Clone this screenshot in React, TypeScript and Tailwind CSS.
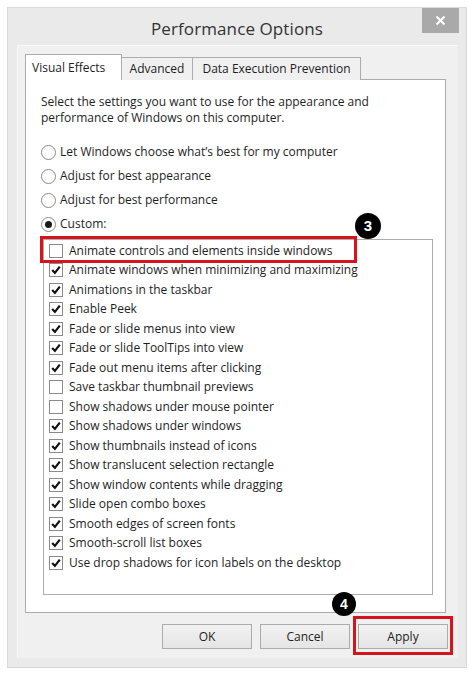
import React from 'react';

const font = { fontFamily: '"Open Sans", "Noto Sans", sans-serif' };

const effects: { label: string; on: boolean }[] = [
  { label: 'Animate controls and elements inside windows', on: false },
  { label: 'Animate windows when minimizing and maximizing', on: true },
  { label: 'Animations in the taskbar', on: true },
  { label: 'Enable Peek', on: true },
  { label: 'Fade or slide menus into view', on: true },
  { label: 'Fade or slide ToolTips into view', on: true },
  { label: 'Fade out menu items after clicking', on: true },
  { label: 'Save taskbar thumbnail previews', on: false },
  { label: 'Show shadows under mouse pointer', on: false },
  { label: 'Show shadows under windows', on: true },
  { label: 'Show thumbnails instead of icons', on: true },
  { label: 'Show translucent selection rectangle', on: true },
  { label: 'Show window contents while dragging', on: true },
  { label: 'Slide open combo boxes', on: true },
  { label: 'Smooth edges of screen fonts', on: true },
  { label: 'Smooth-scroll list boxes', on: true },
  { label: 'Use drop shadows for icon labels on the desktop', on: true },
];

const Badge: React.FC<{ n: number; className: string }> = ({ n, className }) => (
  <div
    className={`absolute rounded-full bg-black text-white font-bold flex items-center justify-center ${className}`}
    style={{ fontFamily: '"Liberation Sans", Arial, sans-serif' }}
  >
    {n}
  </div>
);

const Radio: React.FC<{ label: string; checked?: boolean }> = ({ label, checked }) => (
  <div className="flex items-center h-[24px]">
    <span className="w-[15px] h-[15px] rounded-full border border-[#8c8c8c] bg-white flex items-center justify-center">
      {checked && <span className="w-[7px] h-[7px] rounded-full bg-[#1a1a1a]" />}
    </span>
    <span className="ml-[4px]">{label}</span>
  </div>
);

const Check: React.FC<{ on: boolean }> = ({ on }) => (
  <span className="w-[14px] h-[14px] border border-[#8a8a8a] bg-white flex items-center justify-center shrink-0">
    {on && (
      <svg width="10" height="10" viewBox="0 0 10 10">
        <path d="M1.2 5 L3.9 7.9 L8.8 1.6" fill="none" stroke="#111" strokeWidth="2.2" />
      </svg>
    )}
  </span>
);

const Button: React.FC<{ label: string; children?: React.ReactNode }> = ({ label, children }) => (
  <div className="relative">
    <div className="w-[90px] h-[25px] border border-[#acacac] bg-gradient-to-b from-[#f2f2f2] to-[#e5e5e5] flex items-center justify-center text-[12px] text-[#222]">
      {label}
    </div>
    {children}
  </div>
);

export default function App() {
  return (
    <div className="w-[474px] h-[675px] bg-white pt-[7px] pl-[7px]" style={font}>
      <div className="w-[460px] h-[661px] bg-[#eaeaea] border border-[#dadada] flex flex-col">
        {/* title bar */}
        <div className="h-[37px] grid grid-cols-[1fr_auto_1fr] items-start">
          <div />
          <div className="text-[17px] text-[#333] pt-[8px] tracking-[0.1px]">Performance Options</div>
          <div className="flex justify-end pr-[7px]">
            <div className="w-[37px] h-[25px] bg-[#a9a9a9] flex items-center justify-center">
              <svg width="11" height="11" viewBox="0 0 11 11">
                <path d="M1.5 1.5 L9.5 9.5 M9.5 1.5 L1.5 9.5" stroke="#fff" strokeWidth="2" />
              </svg>
            </div>
          </div>
        </div>

        {/* client area */}
        <div className="ml-[9px] mr-[8px] mb-[9px] flex-1 bg-[#f0f0f0] border-l border-t border-[#f8f8f8] flex flex-col pl-[7px] pr-[10px] pt-[8px] text-[12px] text-[#1e1e1e]">
          {/* tabs */}
          <div className="flex items-end h-[26px] relative z-10">
            <div className="h-[26px] w-[97px] bg-white border border-[#acacac] border-b-0 flex items-center pl-[6px]">
              Visual Effects
            </div>
            <div className="h-[23px] w-[71px] bg-[#f0f0f0] border border-[#acacac] border-l-0 border-b-0 flex items-center justify-center">
              Advanced
            </div>
            <div className="h-[23px] w-[168px] bg-[#f0f0f0] border border-[#acacac] border-l-0 border-b-0 flex items-center justify-center">
              Data Execution Prevention
            </div>
          </div>

          {/* panel */}
          <div className="-mt-px w-[421px] h-[534px] bg-white border border-[#acacac] pl-[15px] pt-[14px] flex flex-col">
            <p className="leading-[16px]">
              Select the settings you want to use for the appearance and
              <br />
              performance of Windows on this computer.
            </p>
            <div className="mt-[14px] flex flex-col">
              <Radio label="Let Windows choose what’s best for my computer" />
              <Radio label="Adjust for best appearance" />
              <Radio label="Adjust for best performance" />
              <Radio label="Custom:" checked />
            </div>

            <div className="relative mt-[3px] ml-[2px] w-[390px] h-[356px] border border-[#acacac] pt-[1px]">
              {effects.map((e) => (
                <div key={e.label} className="h-[19.5px] flex items-center pl-[5px]">
                  <Check on={e.on} />
                  <span className="ml-[6px] whitespace-nowrap">{e.label}</span>
                </div>
              ))}
              <div className="absolute -left-[4px] -top-[4px] w-[317px] h-[27px] border-[3px] border-[#d7141c]" />
              <Badge n={3} className="left-[311px] -top-[27px] w-[26px] h-[26px] text-[15px]" />
            </div>
          </div>

          {/* buttons */}
          <div className="mt-[11px] flex justify-end gap-[8px]">
            <Button label="OK" />
            <Button label="Cancel" />
            <Button label="Apply">
              <div className="absolute -left-[5px] -top-[8px] w-[100px] h-[39px] border-[3px] border-[#d7141c]" />
              <Badge n={4} className="-left-[26px] -top-[32px] w-[24px] h-[24px] text-[14px]" />
            </Button>
          </div>
        </div>
      </div>
    </div>
  );
}
